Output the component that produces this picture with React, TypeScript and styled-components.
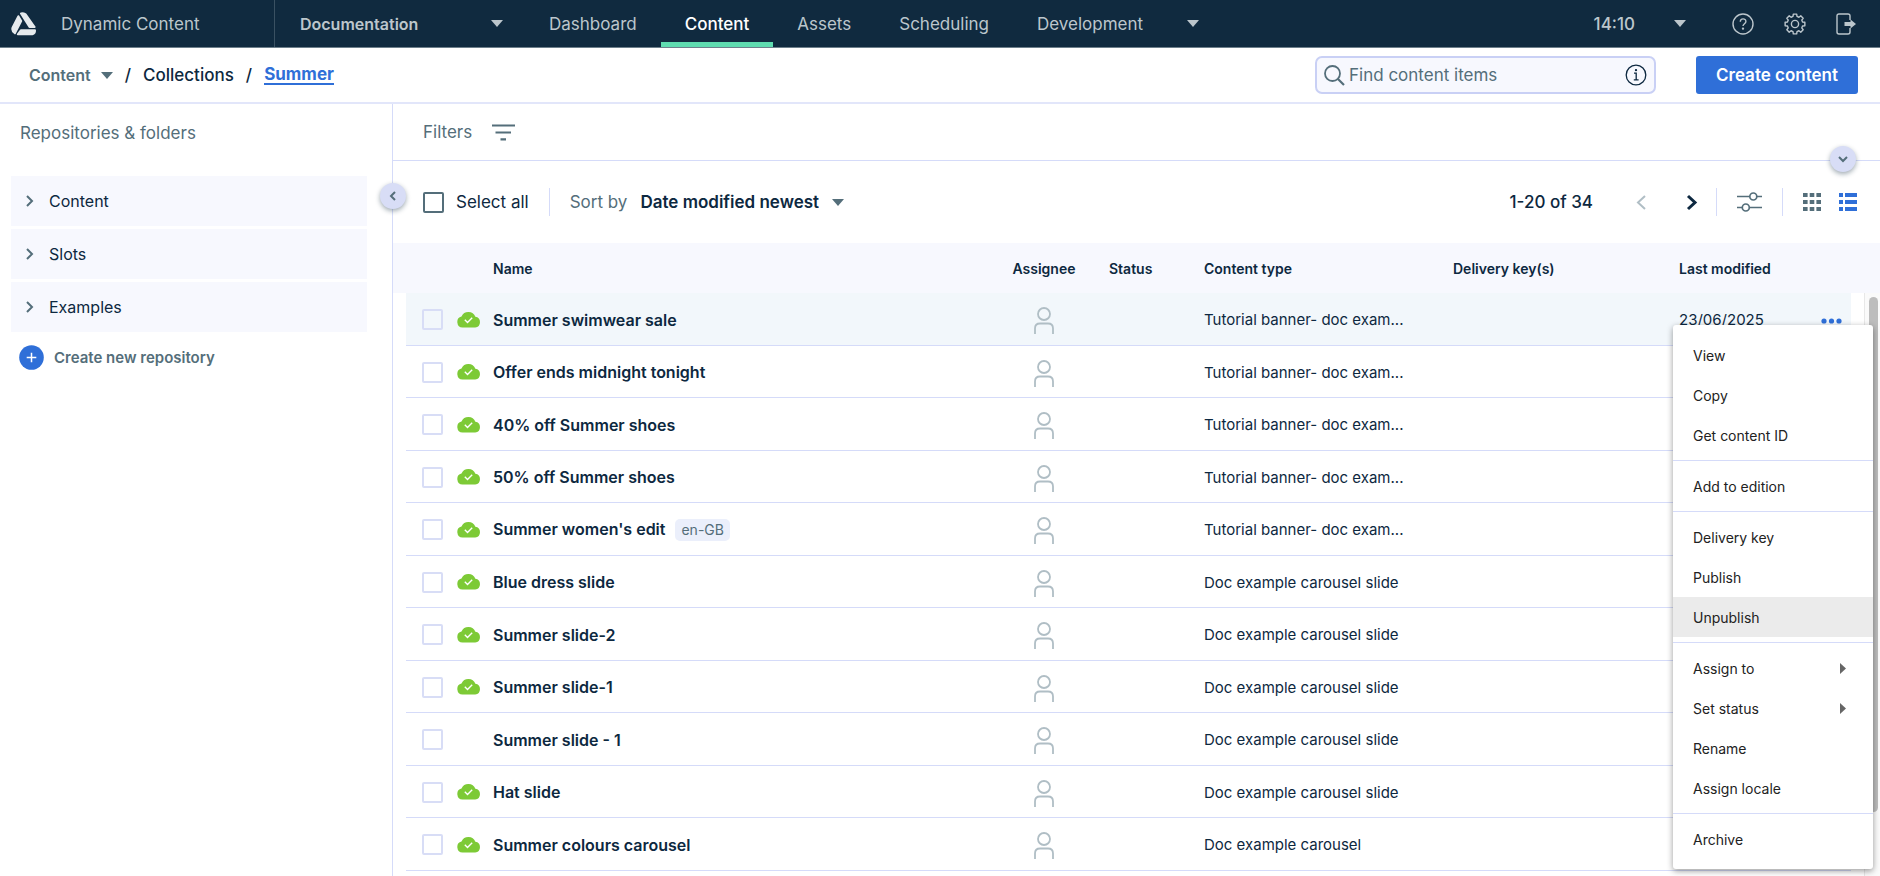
import React from "react";
import styled, { createGlobalStyle, css } from "styled-components";

const color = {
  navy: "#102a3f",
  ink: "#0d2840",
  slate: "#546e7a",
  muted: "#bcc6cc",
  line: "#d5dbf9",
  tint: "#f7f8fe",
  lilac: "#d8ddf6",
  blue: "#2f6fd8",
};

const GlobalStyle = createGlobalStyle`
  *, *::before, *::after { box-sizing: border-box; }
  body {
    margin: 0;
    background: #fff;
    color: ${color.ink};
    font-family: Inter, "Liberation Sans", sans-serif;
    font-size: 16px;
  }
  button, input, select { font: inherit; color: inherit; }
  button {
    display: inline-flex;
    align-items: center;
    padding: 0;
    border: 0;
    background: none;
    vertical-align: middle;
    cursor: pointer;
  }
  a { color: inherit; text-decoration: none; }
  svg { display: block; flex: none; }
`;

const Page = styled.div`
  display: flex;
  flex-direction: column;
  height: 100vh;
  overflow: hidden;
`;

/* Top bar */

const TopBar = styled.header`
  display: flex;
  flex: none;
  height: 48px;
  border-bottom: 1px solid #6d7f8b;
  background: ${color.navy};
  color: ${color.muted};
  font-size: 17px;
`;

const Brand = styled.a`
  display: flex;
  align-items: center;
  gap: 24px;
  width: 275px;
  padding-left: 11px;
  border-right: 1px solid #3a5162;
`;

const SelectWrap = styled.div<{ $gap: number }>`
  display: flex;
  align-items: center;
  position: relative;

  select {
    appearance: none;
    padding: 0 ${(p) => p.$gap + 12}px 0 0;
    border: 0;
    outline: 0;
    background: none;
    font-weight: 600;
  }
  svg {
    position: absolute;
    right: 0;
    pointer-events: none;
  }
`;

const HubSelect = styled(SelectWrap)`
  width: 203px;
  margin: 0 22px 0 25px;
  font-size: 16px;

  select { width: 100%; }
`;

const Tabs = styled.nav`
  display: flex;
  flex: 1;
`;

const Tab = styled.a<{ $active?: boolean }>`
  display: flex;
  align-items: center;
  height: 47px;
  padding: 0 24px;
  ${(p) =>
    p.$active &&
    css`
      color: #fff;
      font-weight: 500;
      box-shadow: inset 0 -5px #5fdcb0;
    `}
`;

const TabMenu = styled.button`
  gap: 44px;
  padding: 0 24px;
`;

const TopActions = styled.div`
  display: flex;
  align-items: center;
  gap: 30px;
  padding-right: 23px;
`;

const Clock = styled.button`
  gap: 39px;
  margin-right: 16px;
  font-weight: 500;
`;

/* Breadcrumb bar */

const SubBar = styled.div`
  display: flex;
  flex: none;
  align-items: center;
  justify-content: space-between;
  height: 56px;
  padding: 0 22px 0 29px;
  border-bottom: 2px solid #e2e6fa;
`;

const Crumbs = styled.nav`
  display: flex;
  align-items: center;
  gap: 12px;
  font-size: 17px;
  font-weight: 500;
`;

const CrumbMenu = styled.button`
  gap: 10px;
  color: ${color.slate};
  font-size: 16px;
  font-weight: 600;
`;

const Current = styled.a`
  border-bottom: 2px solid ${color.blue};
  color: ${color.blue};
  font-weight: 700;
  line-height: 18px;
`;

const Tools = styled.div`
  display: flex;
  gap: 40px;
`;

const SearchBox = styled.label`
  display: flex;
  align-items: center;
  gap: 4px;
  width: 341px;
  height: 38px;
  padding: 0 7px;
  border: 2px solid #c9d0f5;
  border-radius: 7px;
  background: ${color.tint};

  input {
    flex: 1;
    min-width: 0;
    padding: 0;
    border: 0;
    outline: 0;
    background: none;
    font-size: 17px;
  }
  input::placeholder { color: ${color.slate}; opacity: 1; }
`;

const Primary = styled.button`
  height: 38px;
  padding: 0 20px;
  border-radius: 3px;
  background: ${color.blue};
  color: #fff;
  font-size: 17px;
  font-weight: 600;
`;

/* Body */

const Body = styled.div`
  display: flex;
  flex: 1;
  min-height: 0;
`;

const Sidebar = styled.aside`
  display: flex;
  flex: none;
  flex-direction: column;
  position: relative;
  width: 393px;
  padding: 0 25px 0 11px;
  border-right: 1px solid ${color.line};
`;

const SidebarTitle = styled.h2`
  margin: 0 0 14px;
  padding-left: 9px;
  color: ${color.slate};
  font-size: 17px;
  font-weight: 400;
  line-height: 58px;
`;

const Repos = styled.div`
  display: flex;
  flex-direction: column;
  gap: 3px;
`;

const Repo = styled.button`
  gap: 16px;
  height: 50px;
  padding-left: 15px;
  background: ${color.tint};
  font-size: 16px;
`;

const NewRepo = styled.button`
  gap: 10px;
  margin-top: 13px;
  padding-left: 8px;
  color: ${color.slate};
  font-size: 15px;
  font-weight: 600;
`;

const Knob = styled.button`
  justify-content: center;
  position: absolute;
  width: 26px;
  height: 26px;
  border-radius: 50%;
  background: ${color.lilac};
  box-shadow: 0 2px 5px rgba(16, 42, 63, 0.4);
`;

const SideKnob = styled(Knob)`
  top: 79px;
  right: -14px;
`;

const FilterKnob = styled(Knob)`
  right: 24px;
  bottom: -12px;
`;

const Main = styled.main`
  display: flex;
  flex: 1;
  flex-direction: column;
  min-width: 0;
`;

const Filters = styled.div`
  display: flex;
  flex: none;
  position: relative;
  height: 57px;
  padding-left: 30px;
  border-bottom: 1px solid ${color.line};

  > button:first-child {
    gap: 20px;
    color: ${color.slate};
    font-size: 17px;
  }
`;

const ListBar = styled.div`
  display: flex;
  flex: none;
  align-items: center;
  height: 82px;
  padding: 0 23px 0 30px;
`;

const SelectAll = styled.label`
  display: flex;
  align-items: center;
  gap: 12px;
  font-size: 17px;
`;

const Check = styled.input<{ $strong?: boolean }>`
  appearance: none;
  display: block;
  width: 21px;
  height: 21px;
  margin: 0;
  border: 2px solid ${(p) => (p.$strong ? color.slate : color.lilac)};
  border-radius: 2px;
`;

const Rule = styled.span`
  width: 1px;
  height: 28px;
  margin: 0 20px;
  background: ${color.line};
`;

const Sort = styled.label`
  display: flex;
  align-items: center;
  gap: 13px;
  color: ${color.slate};
  font-size: 17px;

  select { color: ${color.ink}; }
`;

const Paging = styled.div`
  display: flex;
  align-items: center;
  margin-left: auto;
  font-size: 17px;
  font-weight: 500;
`;

const Count = styled.span`
  margin-right: 44px;
`;

const PageStep = styled.button`
  & + & { margin-left: 41px; }
`;

const Views = styled.div`
  display: flex;
  gap: 18px;
`;

/* Content table */

const ListArea = styled.div`
  flex: 1;
  position: relative;
  min-height: 0;
`;

const Table = styled.table`
  width: 100%;
  table-layout: fixed;
  border-collapse: separate;
  border-spacing: 0;
`;

const Head = styled.th<{ $w?: number; $center?: boolean }>`
  width: ${(p) => (p.$w ? `${p.$w}px` : "auto")};
  height: 50px;
  padding: 0 0 0 ${(p) => (p.$center || !p.$w ? 0 : 15)}px;
  background: ${color.tint};
  font-size: 14px;
  font-weight: 600;
  text-align: ${(p) => (p.$center ? "center" : "left")};
  white-space: nowrap;
`;

const Cell = styled.td`
  padding: 0 0 0 15px;
  box-shadow: inset 0 -1px ${color.line};
  background-clip: padding-box;
  font-size: 15px;
  white-space: nowrap;

  &:first-child {
    padding-left: 16px;
    border-left: 13px solid transparent;
  }
  &:last-child { border-right: 29px solid transparent; }
`;

const Row = styled.tr<{ $hover?: boolean }>`
  height: 53px;
  &:nth-child(even) { height: 52px; }
  ${Cell} { background-color: ${(p) => (p.$hover ? "#f2f7fb" : "transparent")}; }
`;

const CloudCell = styled(Cell)`
  padding: 0;
`;

const NameCell = styled(Cell)`
  padding: 0;
  font-size: 16px;
  font-weight: 600;
`;

const AssigneeCell = styled(Cell)`
  padding: 2px 0 0;
  svg { margin: 0 auto; }
`;

const Locale = styled.span`
  display: inline-block;
  margin-left: 10px;
  padding: 0 6px;
  border-radius: 5px;
  background: #ebeffb;
  color: ${color.slate};
  font-size: 14px;
  font-weight: 400;
  line-height: 22px;
`;

const ScrollTrack = styled.div`
  position: absolute;
  top: 50px;
  right: 0;
  bottom: 0;
  width: 16px;
  padding: 4px 2px 0 4px;
  border-left: 1px solid #e8e8e8;
  background: #fafafa;

  &::before {
    content: "";
    display: block;
    height: 89%;
    border-radius: 5px;
    background: #bdbdbd;
  }
`;

const Menu = styled.div`
  display: flex;
  flex-direction: column;
  position: absolute;
  top: 82px;
  right: 7px;
  width: 200px;
  padding: 10px 0;
  border-radius: 3px;
  background: #fff;
  box-shadow: 0 2px 6px rgba(0, 0, 0, 0.4);
  color: #222;
  font-size: 14px;

  hr {
    width: 100%;
    margin: 5px 0;
    border: 0;
    border-top: 1px solid ${color.line};
  }
`;

const MenuItem = styled.button<{ $hover?: boolean }>`
  justify-content: space-between;
  height: 40px;
  padding: 0 27px 0 20px;
  background: ${(p) => (p.$hover ? "#ebebeb" : "none")};
`;

/* Icons */

const Caret = ({ fill = color.muted }: { fill?: string }) => (
  <svg width="12" height="7" viewBox="0 0 12 7" fill={fill} aria-hidden="true">
    <path d="M0 0h12L6 7z" />
  </svg>
);

const Chevron = ({ dir, w = 7, h = 12, sw = 2, stroke = color.slate }: { dir: "left" | "right" | "down"; w?: number; h?: number; sw?: number; stroke?: string }) => {
  const points =
    dir === "down"
      ? `1,1 ${w / 2},${h - 1} ${w - 1},1`
      : dir === "left"
      ? `${w - 1},1 1,${h / 2} ${w - 1},${h - 1}`
      : `1,1 ${w - 1},${h / 2} 1,${h - 1}`;
  return (
    <svg width={w} height={h} fill="none" stroke={stroke} strokeWidth={sw} overflow="visible" aria-hidden="true">
      <polyline points={points} />
    </svg>
  );
};

const Logo = () => (
  <svg width="26" height="24" viewBox="0 0 26 24" fill="#e6eaed" stroke="#e6eaed" strokeWidth="2" strokeLinejoin="round" aria-hidden="true">
    <path d="M10 1.5q3-.9 4.8 1l8.800 12.500h-5.100z" />
    <path d="M7.400 4.200 10.200 9 3.900 21.300Q.6 19 1.500 15.800z" />
    <path d="M9.800 18.300H24q.2 3-2.800 4H6.800z" />
  </svg>
);

const Help = () => (
  <svg width="22" height="22" viewBox="0 0 22 22" fill="none" stroke={color.muted} strokeWidth="1.400" aria-hidden="true">
    <circle cx="11" cy="11" r="10" />
    <path d="M8.300 8.700c0-3.800 5.600-3.600 5.600-.3 0 2.300-2.900 2.300-2.900 4.600" />
    <circle cx="11" cy="15.600" r=".5" fill={color.muted} />
  </svg>
);

const gearPath = (() => {
  const pts: string[] = [];
  const teeth = 8;
  for (let i = 0; i < teeth; i++) {
    const a = (i * 2 * Math.PI) / teeth - Math.PI / 2;
    [[-0.26, 7.8], [-0.17, 10], [0.17, 10], [0.26, 7.8]].forEach(([d, r]) =>
      pts.push(`${(11 + r * Math.cos(a + d)).toFixed(2)},${(11 + r * Math.sin(a + d)).toFixed(2)}`)
    );
  }
  return pts.join(" ");
})();

const Gear = () => (
  <svg width="22" height="22" viewBox="0 0 22 22" fill="none" stroke={color.muted} strokeWidth="1.400" strokeLinejoin="round" aria-hidden="true">
    <polygon points={gearPath} />
    <circle cx="11" cy="11" r="3.600" />
  </svg>
);

const Logout = () => (
  <svg width="21" height="22" viewBox="0 0 21 22" aria-hidden="true">
    <path d="M14 7V3q0-2-2-2H3Q1 1 1 3v16q0 2 2 2h9q2 0 2-2v-4" fill="none" stroke={color.muted} strokeWidth="1.400" />
    <path d="M8.500 9h6V6.500l5.500 4.500-5.500 4.500v-2.500h-6z" fill={color.muted} />
  </svg>
);

const SearchIcon = () => (
  <svg width="21" height="21" viewBox="0 0 21 21" fill="none" stroke={color.slate} strokeWidth="1.800" aria-hidden="true">
    <circle cx="8.500" cy="8.500" r="7.500" />
    <path d="m14 14 6 6" strokeWidth="2.200" />
  </svg>
);

const Info = () => (
  <svg width="22" height="22" viewBox="0 0 22 22" fill="none" stroke={color.ink} strokeWidth="1.300" aria-hidden="true">
    <circle cx="11" cy="11" r="9.800" />
    <path d="M9 9.200h2.200v6.300M8.800 15.800h4.800" />
    <circle cx="11" cy="6.200" r=".5" fill={color.ink} />
  </svg>
);

const FilterIcon = () => (
  <svg width="23" height="17" viewBox="0 0 23 17" stroke={color.slate} strokeWidth="2.200" aria-hidden="true">
    <path d="M0 1.500h23M3.500 8.500h15.500M8.500 15.300h5.500" />
  </svg>
);

const PlusDisc = () => (
  <svg width="25" height="25" viewBox="0 0 25 25" aria-hidden="true">
    <circle cx="12.500" cy="12.500" r="12.300" fill={color.blue} />
    <path d="M12.500 7.700v9.600M7.700 12.500h9.600" stroke="#fff" strokeWidth="1.500" />
  </svg>
);

const Sliders = () => (
  <svg width="25" height="20" viewBox="0 0 25 20" fill="none" stroke={color.slate} strokeWidth="1.700" aria-hidden="true">
    <path d="M0 4.500h12.500M20 4.500h5M0 15.500h5M12.500 15.500H25" />
    <circle cx="16.300" cy="4.500" r="3.500" />
    <circle cx="8.800" cy="15.500" r="3.500" />
  </svg>
);

const GridIcon = () => (
  <svg width="18" height="18" viewBox="0 0 18 18" fill={color.slate} aria-hidden="true">
    {[0, 7, 14].map((y) => [0, 6.7, 13.4].map((x) => <rect key={`${x}-${y}`} x={x} y={y} width="4.600" height="4" />))}
  </svg>
);

const ListIcon = () => (
  <svg width="18" height="18" viewBox="0 0 18 18" fill={color.blue} aria-hidden="true">
    {[0, 7, 14].map((y) => (
      <React.Fragment key={y}>
        <rect y={y} width="4" height="4" />
        <rect x="6" y={y} width="12" height="4" />
      </React.Fragment>
    ))}
  </svg>
);

const Cloud = () => (
  <svg width="24" height="18" viewBox="0 0 24 18" role="img" aria-label="Published">
    <path d="M5.500 16.500a5.600 5.600 0 0 1-1-11A7.600 7.600 0 0 1 18.400 5.800a5.400 5.400 0 0 1-.2 10.700z" fill="#7dca36" />
    <path d="m7.800 8.800 2.700 2.600 4.700-4.600" fill="none" stroke="#fff" strokeWidth="1.400" />
  </svg>
);

const Person = () => (
  <svg width="20" height="27" viewBox="0 0 20 27" fill="none" stroke="#b0bec5" strokeWidth="1.800" role="img" aria-label="Unassigned">
    <circle cx="10" cy="7" r="6" />
    <path d="M1 27v-5.500q0-5 5-5h8q5 0 5 5V27" />
  </svg>
);

const Dots = () => (
  <svg width="21" height="6" viewBox="0 0 21 6" fill={color.blue} aria-hidden="true">
    <circle cx="3" cy="3" r="2.600" />
    <circle cx="10.500" cy="3" r="2.600" />
    <circle cx="18" cy="3" r="2.600" />
  </svg>
);

const Submenu = () => (
  <svg width="6" height="11" viewBox="0 0 6 11" fill="#666" aria-hidden="true">
    <path d="M0 0l6 5.500L0 11z" />
  </svg>
);

/* Data */

type Item = { name: string; type: string; locale?: string; draft?: boolean; modified?: string };

const BANNER = "Tutorial banner- doc exam...";
const SLIDE = "Doc example carousel slide";

const items: Item[] = [
  { name: "Summer swimwear sale", type: BANNER, modified: "23/06/2025" },
  { name: "Offer ends midnight tonight", type: BANNER },
  { name: "40% off Summer shoes", type: BANNER },
  { name: "50% off Summer shoes", type: BANNER },
  { name: "Summer women's edit", type: BANNER, locale: "en-GB" },
  { name: "Blue dress slide", type: SLIDE },
  { name: "Summer slide-2", type: SLIDE },
  { name: "Summer slide-1", type: SLIDE },
  { name: "Summer slide - 1", type: SLIDE, draft: true },
  { name: "Hat slide", type: SLIDE },
  { name: "Summer colours carousel", type: "Doc example carousel" },
];

const menuGroups = [
  ["View", "Copy", "Get content ID"],
  ["Add to edition"],
  ["Delivery key", "Publish", "Unpublish"],
  ["Assign to", "Set status", "Rename", "Assign locale"],
  ["Archive"],
];

const withSubmenu = ["Assign to", "Set status"];

export default function App() {
  return (
    <Page>
      <GlobalStyle />
      <TopBar>
        <Brand href="#">
          <Logo />
          Dynamic Content
        </Brand>
        <HubSelect $gap={0}>
          <select aria-label="Hub">
            <option>Documentation</option>
          </select>
          <Caret />
        </HubSelect>
        <Tabs>
          <Tab href="#">Dashboard</Tab>
          <Tab href="#" $active>Content</Tab>
          <Tab href="#">Assets</Tab>
          <Tab href="#">Scheduling</Tab>
          <TabMenu>
            Development
            <Caret />
          </TabMenu>
        </Tabs>
        <TopActions>
          <Clock>
            14:10
            <Caret />
          </Clock>
          <button aria-label="Help"><Help /></button>
          <button aria-label="Settings"><Gear /></button>
          <button aria-label="Log out"><Logout /></button>
        </TopActions>
      </TopBar>

      <SubBar>
        <Crumbs>
          <CrumbMenu>
            Content
            <Caret fill={color.slate} />
          </CrumbMenu>
          <span>/</span>
          <a href="#">Collections</a>
          <span>/</span>
          <Current href="#">Summer</Current>
        </Crumbs>
        <Tools>
          <SearchBox>
            <SearchIcon />
            <input type="text" placeholder="Find content items" aria-label="Find content items" />
            <Info />
          </SearchBox>
          <Primary>Create content</Primary>
        </Tools>
      </SubBar>

      <Body>
        <Sidebar>
          <SidebarTitle>Repositories &amp; folders</SidebarTitle>
          <Repos>
            {["Content", "Slots", "Examples"].map((name) => (
              <Repo key={name}>
                <Chevron dir="right" />
                {name}
              </Repo>
            ))}
          </Repos>
          <NewRepo>
            <PlusDisc />
            Create new repository
          </NewRepo>
          <SideKnob aria-label="Collapse sidebar">
            <Chevron dir="left" w={6} h={10} />
          </SideKnob>
        </Sidebar>

        <Main>
          <Filters>
            <button>
              Filters
              <FilterIcon />
            </button>
            <FilterKnob aria-label="Expand filters">
              <Chevron dir="down" w={10} h={6} />
            </FilterKnob>
          </Filters>

          <ListBar>
            <SelectAll>
              <Check type="checkbox" $strong />
              Select all
            </SelectAll>
            <Rule />
            <Sort>
              Sort by
              <SelectWrap $gap={13}>
                <select>
                  <option>Date modified newest</option>
                </select>
                <Caret fill={color.slate} />
              </SelectWrap>
            </Sort>
            <Paging>
              <Count>1-20 of 34</Count>
              <PageStep aria-label="Previous page"><Chevron dir="left" w={9} h={15} sw={2} stroke="#b0bec5" /></PageStep>
              <PageStep aria-label="Next page"><Chevron dir="right" w={9} h={15} sw={3} stroke={color.ink} /></PageStep>
              <Rule />
              <button aria-label="Customise columns"><Sliders /></button>
              <Rule />
              <Views>
                <button aria-label="Grid view"><GridIcon /></button>
                <button aria-label="List view"><ListIcon /></button>
              </Views>
            </Paging>
          </ListBar>

          <ListArea>
            <Table>
              <thead>
                <tr>
                  <Head $w={64} />
                  <Head $w={36} />
                  <Head>Name</Head>
                  <Head $w={100} $center>Assignee</Head>
                  <Head $w={95}>Status</Head>
                  <Head $w={249}>Content type</Head>
                  <Head $w={226}>Delivery key(s)</Head>
                  <Head $w={142}>Last modified</Head>
                  <Head $w={74} />
                </tr>
              </thead>
              <tbody>
                {items.map((item, i) => (
                  <Row key={item.name} $hover={i === 0}>
                    <Cell><Check type="checkbox" aria-label={`Select ${item.name}`} /></Cell>
                    <CloudCell>{!item.draft && <Cloud />}</CloudCell>
                    <NameCell>
                      {item.name}
                      {item.locale && <Locale>{item.locale}</Locale>}
                    </NameCell>
                    <AssigneeCell><Person /></AssigneeCell>
                    <Cell />
                    <Cell>{item.type}</Cell>
                    <Cell />
                    <Cell>{item.modified}</Cell>
                    <Cell>{i === 0 && <button aria-label="Item actions"><Dots /></button>}</Cell>
                  </Row>
                ))}
              </tbody>
            </Table>
            <ScrollTrack />
            <Menu role="menu">
              {menuGroups.map((group, g) => (
                <React.Fragment key={group[0]}>
                  {g > 0 && <hr />}
                  {group.map((label) => (
                    <MenuItem key={label} role="menuitem" $hover={label === "Unpublish"}>
                      {label}
                      {withSubmenu.includes(label) && <Submenu />}
                    </MenuItem>
                  ))}
                </React.Fragment>
              ))}
            </Menu>
          </ListArea>
        </Main>
      </Body>
    </Page>
  );
}
